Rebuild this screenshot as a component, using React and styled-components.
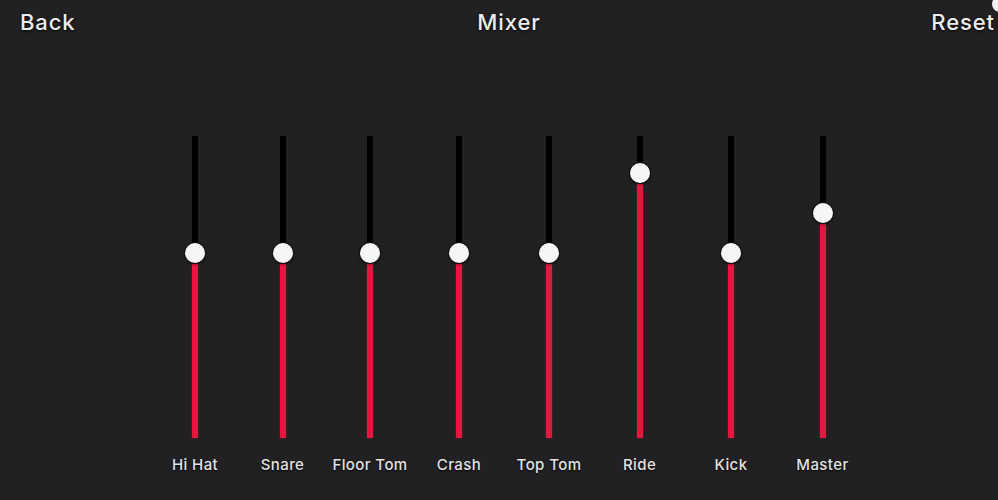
import React from "react";
import styled, { createGlobalStyle } from "styled-components";

const Global = createGlobalStyle`
  html, body { margin: 0; padding: 0; background: #212123; }
  body { width: 998px; height: 500px; overflow: hidden; }
`;

const Screen = styled.div`
  position: relative;
  width: 998px;
  height: 500px;
  background: #212123;
  font-family: "Inter", "Noto Sans", sans-serif;
  color: #ececec;
  overflow: hidden;
`;

const Header = styled.div`
  display: grid;
  grid-template-columns: 1fr auto 1fr;
  align-items: center;
  height: 44px;
  padding: 0 0 0 20px;
`;

const HeadText = styled.div`
  font-size: 22px;
  font-weight: 500;
  letter-spacing: 0.9px;
  white-space: nowrap;
  text-shadow: 0 1px 3px rgba(0,0,0,0.9);
  justify-self: ${(p) => p.$align || "start"};
  margin-right: ${(p) => p.$mr || 0}px;
`;

const CornerDot = styled.div`
  position: absolute;
  top: -4px;
  right: -10px;
  width: 16px;
  height: 16px;
  border-radius: 50%;
  background: #f0f0f0;
`;

const Board = styled.div`
  display: grid;
  grid-template-columns: 88px 87px 88px 90px 90px 91px 92px 91px;
  padding-left: 151px;
  margin-top: 92px;
`;

const Channel = styled.div`
  display: flex;
  flex-direction: column;
  align-items: center;
`;

const Track = styled.div`
  position: relative;
  width: 6px;
  height: 302px;
  background: #000;
`;

const Fill = styled.div`
  position: absolute;
  left: 0;
  right: 0;
  bottom: 0;
  background: #e2193f;
  box-shadow: 0 0 2px rgba(226,25,63,0.5);
`;

const Thumb = styled.div`
  position: absolute;
  left: 50%;
  width: 20px;
  height: 20px;
  margin-left: -10px;
  margin-bottom: -10px;
  border-radius: 50%;
  background: #f6f6f6;
  box-shadow: 0 0 0 1px #111, 0 1px 3px rgba(0,0,0,0.8);
`;

const Label = styled.div`
  margin-top: 17px;
  font-size: 15px;
  font-weight: 500;
  letter-spacing: 0.4px;
  white-space: nowrap;
  color: #e2e2e2;
  text-shadow: 0 1px 2px rgba(0,0,0,0.9);
`;

const channels = [
  { name: "Hi Hat", v: 0.613 },
  { name: "Snare", v: 0.613 },
  { name: "Floor Tom", v: 0.613 },
  { name: "Crash", v: 0.613 },
  { name: "Top Tom", v: 0.613 },
  { name: "Ride", v: 0.877 },
  { name: "Kick", v: 0.613 },
  { name: "Master", v: 0.745 },
];

export default function App() {
  return (
    <Screen>
      <Global />
      <Header>
        <HeadText>Back</HeadText>
        <HeadText $align="center">Mixer</HeadText>
        <HeadText $align="end" $mr={3}>Reset</HeadText>
      </Header>
      <CornerDot />
      <Board>
        {channels.map((c) => (
          <Channel key={c.name}>
            <Track>
              <Fill style={{ height: `${c.v * 100}%` }} />
              <Thumb style={{ bottom: `${c.v * 100}%` }} />
            </Track>
            <Label>{c.name}</Label>
          </Channel>
        ))}
      </Board>
    </Screen>
  );
}
